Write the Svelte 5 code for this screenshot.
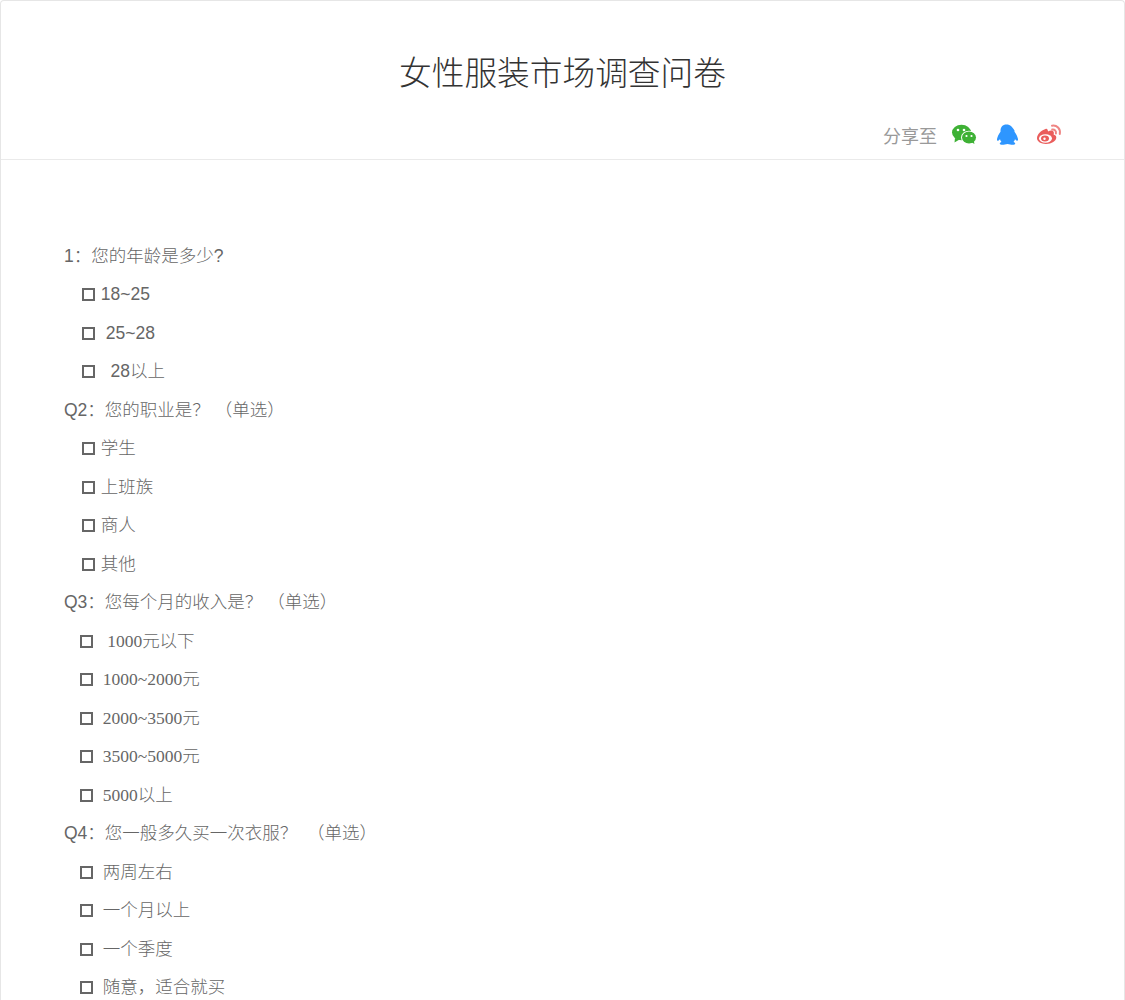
<script>
  const questions = [
    { title: '1：', text: '您的年龄是多少?', cls: '', options: [
      { indent: 18, pad: 1, label: '18~25' },
      { indent: 18, pad: 2, label: '25~28' },
      { indent: 18, pad: 3, label: '28以上' }
    ] },
    { title: 'Q2：', text: '您的职业是？ （单选）', cls: '', options: [
      { indent: 18, pad: 1, label: '学生' },
      { indent: 18, pad: 1, label: '上班族' },
      { indent: 18, pad: 1, label: '商人' },
      { indent: 18, pad: 1, label: '其他' }
    ] },
    { title: 'Q3：', text: '您每个月的收入是？ （单选）', cls: 'serif', options: [
      { indent: 16, pad: 3, label: '1000元以下' },
      { indent: 16, pad: 2, label: '1000~2000元' },
      { indent: 16, pad: 2, label: '2000~3500元' },
      { indent: 16, pad: 2, label: '3500~5000元' },
      { indent: 16, pad: 2, label: '5000以上' }
    ] },
    { title: 'Q4：', text: '您一般多久买一次衣服？\u00a0\u00a0（单选）', cls: 'serif', options: [
      { indent: 16, pad: 2, label: '两周左右' },
      { indent: 16, pad: 2, label: '一个月以上' },
      { indent: 16, pad: 2, label: '一个季度' },
      { indent: 16, pad: 2, label: '随意，适合就买' }
    ] }
  ];
</script>

<div class="page">
  <header class="head">
    <h1>女性服装市场调查问卷</h1>
    <div class="share">
      <span class="share-label">分享至</span>
      <svg class="icon wechat" viewBox="0 0 26 22" width="26" height="22" aria-hidden="true">
        <ellipse cx="10.500" cy="8.500" rx="9.500" ry="7.800" fill="#3eb135" />
        <path d="M4 14l-.5 4.500 5-3z" fill="#3eb135" />
        <ellipse cx="18" cy="13.500" rx="8" ry="6.800" fill="#fff" />
        <ellipse cx="18" cy="13.500" rx="7" ry="5.900" fill="#3eb135" />
        <path d="M20 18l3.500 2-1-4z" fill="#3eb135" />
        <circle cx="7" cy="6" r="1.300" fill="#fff" />
        <circle cx="13" cy="6" r="1.300" fill="#fff" />
        <circle cx="15.500" cy="12" r="1.100" fill="#fff" />
        <circle cx="20.500" cy="12" r="1.100" fill="#fff" />
      </svg>
      <svg class="icon qq" viewBox="0 0 22 22" width="22" height="22" aria-hidden="true">
        <path d="M10.500 .5C6.500 .5 4.500 3.200 4.500 6.500v1.200C2.800 10 1.500 12.500 1 15c-.3 1.600.8 2.300 1.800 1.200l1.200-1c.3 1.100.8 2 1.500 2.800-1.300.5-1.900 1.200-1.700 2 .2.900 3.500 1 5 .4l2.700-.4 2.700.4c1.500.6 4.800.5 5-.4.200-.8-.4-1.500-1.700-2 .7-.8 1.200-1.700 1.500-2.800l1.200 1c1 1.100 2.100.4 1.800-1.200-.5-2.500-1.800-5-3.500-7.300V6.500C16.500 3.200 14.500 .5 10.500 .5z" fill="#2e96ff" />
      </svg>
      <svg class="icon weibo" viewBox="0 0 26 22" width="26" height="22" aria-hidden="true">
        <path d="M9.500 5C5 6.500 1 10.500 1 14.300c0 3.500 4.200 5.700 9 5.700 5.600 0 10.300-3.200 10.300-6.500 0-1.700-1.300-2.500-2.700-2.900.5-1.500.4-2.900-.6-3.600-1.200-.8-3.300-.5-5 .4-.3-2.300-1-3-2.500-2.400z" fill="#ea5d5c" />
        <ellipse cx="9.500" cy="14.500" rx="6.500" ry="4.200" fill="#fff" />
        <ellipse cx="9" cy="14.500" rx="4" ry="3" fill="#ea5d5c" />
        <circle cx="8.500" cy="14.800" r="1.200" fill="#fff" />
        <path d="M16 1.700c4.800-.8 8.800 3 7.800 8.300M16.200 5.500c2.400-.4 4.200 1.400 3.700 4" fill="none" stroke="#ef8583" stroke-width="2" stroke-linecap="round" />
      </svg>
    </div>
  </header>

  <main class="body">
    {#each questions as q}
      <p class="row q">{q.title}{q.text}</p>
      {#each q.options as opt}
        <p class="row opt {q.cls}" style="padding-left: {opt.indent}px">
          <span class="box"></span>{'\u00a0'.repeat(opt.pad)}{opt.label}
        </p>
      {/each}
    {/each}
  </main>
</div>

<style>
  :global(body) {
    background: #fff;
  }
  .page {
    height: 1000px;
    overflow: hidden;
    box-sizing: border-box;
    border: 1px solid #e6e6e6;
    border-bottom: 0;
    border-radius: 4px 4px 0 0;
    color: #666;
    font-family: "Liberation Sans", "Noto Sans CJK SC", sans-serif;
    font-size: 17.5px;
  }
  .head {
    height: 158px;
    border-bottom: 1px solid #eaeaea;
  }
  h1 {
    margin: 0;
    padding-top: 51px;
    height: 44px;
    line-height: 44px;
    text-align: center;
    font-size: 32.700px;
    font-weight: 300;
    color: #333;
  }
  .share {
    display: flex;
    justify-content: flex-end;
    align-items: center;
    height: 24px;
    margin-top: 27px;
    padding-right: 62px;
    font-size: 18px;
    color: #999;
  }
  .share-label {
    margin-right: 14px;
  }
  .icon {
    margin-right: 19px;
  }
  .icon.qq {
    margin-right: 18px;
  }
  .icon.weibo {
    margin-right: 0;
  }
  .body {
    padding: 76.600px 63px 0;
  }
  .row {
    margin: 0;
    height: 38.500px;
    line-height: 38.500px;
    white-space: nowrap;
    font-weight: 300;
  }
  .opt.serif {
    font-family: "Liberation Serif", "Noto Sans CJK SC", serif;
  }
  .box {
    display: inline-block;
    width: 13px;
    height: 13px;
    margin-right: 1px;
    box-sizing: border-box;
    border: 2px solid #666;
    vertical-align: -1px;
  }
</style>
